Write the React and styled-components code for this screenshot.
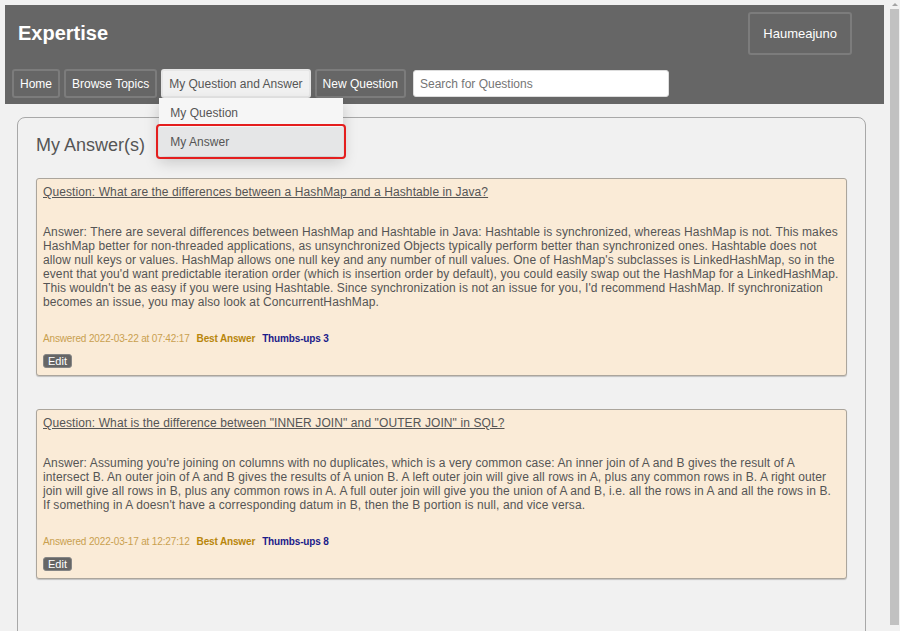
import React from "react";
import styled, { createGlobalStyle } from "styled-components";

const GlobalStyle = createGlobalStyle`
  html, body {
    margin: 0;
    height: 100%;
    overflow: hidden;
    background: #f1f1f1;
  }
  body {
    font-family: "Liberation Sans", Arial, sans-serif;
  }
  * { box-sizing: border-box; }
`;

const Shell = styled.div`
  display: flex;
  height: 100vh;
`;

const Page = styled.div`
  flex: 1;
  min-width: 0;
  padding: 5px 3px 0 5px;
  overflow: hidden;
`;

/* fake browser scrollbar on the right */
const Scrollbar = styled.div`
  width: 13px;
  display: flex;
  flex-direction: column;
  align-items: flex-end;
  padding: 3px 1px 6px 0;
  background: #f1f1f1;
`;

const ScrollArrow = styled.div`
  width: 9px;
  display: flex;
  justify-content: center;
  &::before {
    content: "";
    border-left: 3px solid transparent;
    border-right: 3px solid transparent;
    border-bottom: 3px solid #a3a3a3;
  }
`;

const ScrollThumb = styled.div`
  width: 9px;
  flex: 1;
  margin-top: 3px;
  background: #c1c1c1;
`;

const Header = styled.header`
  background: #666;
  padding: 7px 32px 6px 7px;
`;

const TopRow = styled.div`
  display: flex;
  align-items: center;
  justify-content: space-between;
  padding-left: 6px;
`;

const Brand = styled.h1`
  margin: 0;
  font-size: 20px;
  font-weight: 700;
  color: #fff;
`;

const UserButton = styled.button`
  height: 43px;
  padding: 0 13px;
  font-family: inherit;
  font-size: 13px;
  color: #fff;
  background: #666;
  border: 2px solid #7c7c7c;
  border-radius: 3px;
`;

const NavRow = styled.nav`
  display: flex;
  align-items: center;
  gap: 4px;
  margin-top: 14px;
`;

const NavItem = styled.div`
  position: relative;
`;

const NavButton = styled.button`
  height: 29px;
  padding: 0 6px;
  font-family: inherit;
  font-size: 12px;
  color: ${(p) => (p.$active ? "#555" : "#fff")};
  background: ${(p) => (p.$active ? "#f1f1f1" : "#666")};
  border: 2px solid ${(p) => (p.$active ? "#e6e6e6" : "#7c7c7c")};
  border-radius: 3px;
`;

const Search = styled.input`
  width: 256px;
  height: 27px;
  margin-left: 3px;
  padding: 0 6px;
  font-family: inherit;
  font-size: 12px;
  border: 1px solid #ddd;
  border-radius: 3px;
  background: #fff;
  &::placeholder {
    color: #757575;
  }
`;

const Menu = styled.div`
  position: absolute;
  top: 100%;
  left: -2px;
  width: 184px;
  background: #f6f6f6;
  box-shadow: 0 6px 14px rgba(0, 0, 0, 0.18);
  z-index: 5;
`;

const MenuItem = styled.div`
  height: 29px;
  display: flex;
  align-items: center;
  padding: 0 11px;
  font-size: 12px;
  letter-spacing: 0.05px;
  color: #555;
  background: ${(p) => (p.$hover ? "#e5e6e7" : "transparent")};
  outline: ${(p) => (p.$hover ? "2px solid #e41e1e" : "none")};
  outline-offset: 1px;
  border-radius: 1px;
`;

const Main = styled.main`
  margin: 13px 18px 0 12px;
  padding: 0 18px 60px;
  border: 1px solid #a8a8a8;
  border-radius: 8px;
`;

const Title = styled.h2`
  margin: 17px 0 22px;
  font-size: 18px;
  font-weight: 400;
  line-height: 21px;
  color: #555;
`;

const Card = styled.article`
  margin-bottom: 33px;
  padding: 6px 6px 7px;
  background: #faebd7;
  border: 1px solid #aba59c;
  border-radius: 3px;
  box-shadow: 0 1px 1px rgba(0, 0, 0, 0.2);
  color: #555;
`;

const QuestionLink = styled.a`
  display: block;
  font-size: 12px;
  line-height: 14px;
  letter-spacing: 0.1px;
  color: #555;
  text-decoration: underline;
`;

const AnswerText = styled.p`
  margin: 26px 0 0;
  font-size: 12px;
  line-height: 14px;
  letter-spacing: 0.1px;
`;

const Meta = styled.div`
  display: flex;
  gap: 7px;
  margin-top: 24px;
  font-size: 10px;
  line-height: 11px;
  letter-spacing: -0.15px;
`;

const MetaPart = styled.span`
  color: ${(p) => p.$color};
  font-weight: ${(p) => (p.$bold ? 700 : 400)};
`;

const EditButton = styled.button`
  display: block;
  height: 14px;
  margin-top: 10px;
  padding: 0 4px;
  font-family: inherit;
  font-size: 11px;
  line-height: 12px;
  color: #fff;
  background: #666;
  border: 1px solid #858585;
  border-radius: 3px;
`;

const answers = [
  {
    question: "Question: What are the differences between a HashMap and a Hashtable in Java?",
    answer:
      "Answer: There are several differences between HashMap and Hashtable in Java: Hashtable is synchronized, whereas HashMap is not. This makes HashMap better for non-threaded applications, as unsynchronized Objects typically perform better than synchronized ones. Hashtable does not allow null keys or values. HashMap allows one null key and any number of null values. One of HashMap's subclasses is LinkedHashMap, so in the event that you'd want predictable iteration order (which is insertion order by default), you could easily swap out the HashMap for a LinkedHashMap. This wouldn't be as easy if you were using Hashtable. Since synchronization is not an issue for you, I'd recommend HashMap. If synchronization becomes an issue, you may also look at ConcurrentHashMap.",
    date: "2022-03-22 at 07:42:17",
    thumbs: 3,
  },
  {
    question: 'Question: What is the difference between "INNER JOIN" and "OUTER JOIN" in SQL?',
    answer:
      "Answer: Assuming you're joining on columns with no duplicates, which is a very common case: An inner join of A and B gives the result of A intersect B. An outer join of A and B gives the results of A union B. A left outer join will give all rows in A, plus any common rows in B. A right outer join will give all rows in B, plus any common rows in A. A full outer join will give you the union of A and B, i.e. all the rows in A and all the rows in B. If something in A doesn't have a corresponding datum in B, then the B portion is null, and vice versa.",
    date: "2022-03-17 at 12:27:12",
    thumbs: 8,
  },
];

export default function App() {
  return (
    <>
      <GlobalStyle />
      <Shell>
        <Page>
          <Header>
            <TopRow>
              <Brand>Expertise</Brand>
              <UserButton>Haumeajuno</UserButton>
            </TopRow>
            <NavRow>
              <NavButton>Home</NavButton>
              <NavButton>Browse Topics</NavButton>
              <NavItem>
                <NavButton $active>My Question and Answer</NavButton>
                <Menu>
                  <MenuItem>My Question</MenuItem>
                  <MenuItem $hover>My Answer</MenuItem>
                </Menu>
              </NavItem>
              <NavButton>New Question</NavButton>
              <Search placeholder="Search for Questions" />
            </NavRow>
          </Header>
          <Main>
            <Title>My Answer(s)</Title>
            {answers.map((a) => (
              <Card key={a.date}>
                <QuestionLink href="#">{a.question}</QuestionLink>
                <AnswerText>{a.answer}</AnswerText>
                <Meta>
                  <MetaPart $color="#c9a04f">Answered {a.date}</MetaPart>
                  <MetaPart $color="#b8860b" $bold>Best Answer</MetaPart>
                  <MetaPart $color="#1c1c8a" $bold>Thumbs-ups {a.thumbs}</MetaPart>
                </Meta>
                <EditButton>Edit</EditButton>
              </Card>
            ))}
          </Main>
        </Page>
        <Scrollbar>
          <ScrollArrow />
          <ScrollThumb />
        </Scrollbar>
      </Shell>
    </>
  );
}
